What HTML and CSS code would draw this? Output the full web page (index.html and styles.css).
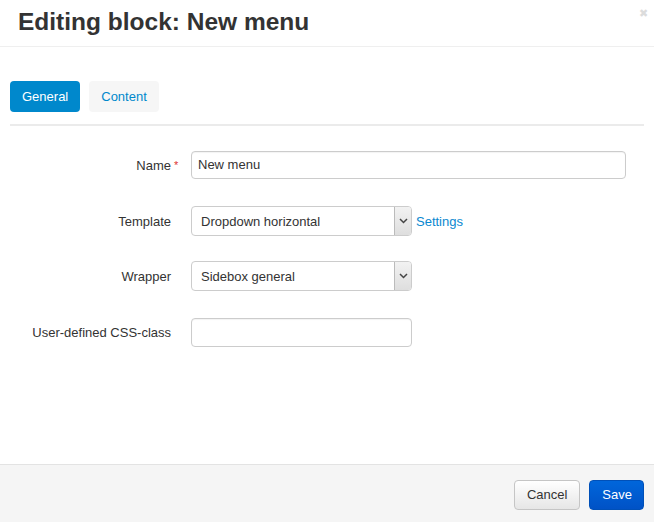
FILE: index.html
```html
<!DOCTYPE html>
<html>
<head>
<meta charset="utf-8">
<link rel="stylesheet" href="styles.css">
</head>
<body>
<div class="modal">
  <div class="modal-header">
    <h3 class="title">Editing block: New menu</h3>
    <span class="close">&#10006;</span>
  </div>
  <div class="modal-body">
    <div class="tabs">
      <span class="tab active">General</span>
      <span class="tab">Content</span>
    </div>
    <div class="form">
      <div class="row">
        <label class="label"><span class="req-wrap">Name<span class="req">*</span></span></label>
        <div class="control"><div class="input wide">New menu</div></div>
      </div>
      <div class="row row-shift">
        <label class="label">Template</label>
        <div class="control">
          <div class="select"><span class="select-text">Dropdown horizontal</span><span class="arrow"><svg width="9" height="6" viewBox="0 0 9 6"><path d="M1 1 L4.5 4.5 L8 1" fill="none" stroke="#444" stroke-width="1.5"/></svg></span></div>
          <a class="link">Settings</a>
        </div>
      </div>
      <div class="row">
        <label class="label">Wrapper</label>
        <div class="control">
          <div class="select"><span class="select-text">Sidebox general</span><span class="arrow"><svg width="9" height="6" viewBox="0 0 9 6"><path d="M1 1 L4.5 4.5 L8 1" fill="none" stroke="#444" stroke-width="1.5"/></svg></span></div>
        </div>
      </div>
      <div class="row row-shift">
        <label class="label">User-defined CSS-class</label>
        <div class="control"><div class="input narrow"></div></div>
      </div>
    </div>
  </div>
  <div class="modal-footer">
    <span class="btn cancel">Cancel</span>
    <span class="btn save">Save</span>
  </div>
</div>
</body>
</html>
```
FILE: styles.css
```css
html, body { margin: 0; padding: 0; background: #fff; }
body { font-family: "Liberation Sans", Arial, sans-serif; font-size: 13px; color: #333; }
.modal { height: 522px; display: flex; flex-direction: column; }
.modal-header { height: 47px; border-bottom: 1px solid #efefef; padding: 0 18px; position: relative; box-sizing: border-box; display: flex; align-items: center; }
.title { margin: 0; font-size: 24.5px; font-weight: bold; color: #333; line-height: 28px; padding-bottom: 2px; }
.close { position: absolute; right: 6px; top: 7px; font-size: 11px; color: #dcdcdc; }
.modal-body { padding: 34px 10px 0; flex: 1; }
.tabs { display: flex; gap: 9px; padding-bottom: 12px; border-bottom: 2px solid #ebebeb; }
.tab { height: 31px; line-height: 31px; padding: 0 12px; border-radius: 4px; background: #f6f6f6; color: #0088cc; font-size: 13px; }
.tab.active { background: #0088cc; color: #fff; }
.form { padding-top: 24px; display: flex; flex-direction: column; gap: 25px; }
.row { display: grid; grid-template-columns: 161px 1fr; column-gap: 20px; align-items: center; min-height: 30px; }
.row-shift { margin-top: 1px; }
.label { text-align: right; color: #333; }
.req-wrap { position: relative; }
.req { position: absolute; left: 100%; top: 1px; margin-left: 3px; color: #d33; font-size: 11px; }
.control { display: flex; align-items: center; gap: 4px; }
.input { height: 28px; box-sizing: border-box; border: 1px solid #ccc; border-radius: 4px; padding: 0 6px; line-height: 26px; font-size: 13px; color: #333; background: #fff; box-shadow: inset 0 1px 1px rgba(0,0,0,0.05); }
.input.wide { width: 435px; }
.input.narrow { width: 221px; height: 29px; }
.select { width: 221px; height: 30px; box-sizing: border-box; border: 1px solid #ccc; border-radius: 4px; display: flex; align-items: center; background: #fff; overflow: hidden; }
.select-text { flex: 1; padding-left: 9px; font-size: 13px; color: #333; }
.arrow { width: 17px; height: 100%; box-sizing: border-box; border-left: 1px solid #bbb; background: linear-gradient(#f2f2f2, #dedede); display: flex; align-items: center; justify-content: center; }
.link { color: #0a88d0; font-size: 13px; }
.modal-footer { height: 58px; box-sizing: border-box; border-top: 1px solid #e3e3e3; background: #f5f5f5; display: flex; justify-content: flex-end; align-items: center; gap: 9px; padding: 2px 10px 0; }
.btn { height: 30px; line-height: 28px; box-sizing: border-box; border-radius: 4px; padding: 0 12px; font-size: 13px; }
.cancel { border: 1px solid #c5c5c5; background: linear-gradient(#fff, #e6e6e6); color: #333; }
.save { border: 1px solid #0050b8; background: linear-gradient(#0066db, #0052c6); color: #fff; padding: 0 11px 0 12px; }
```
